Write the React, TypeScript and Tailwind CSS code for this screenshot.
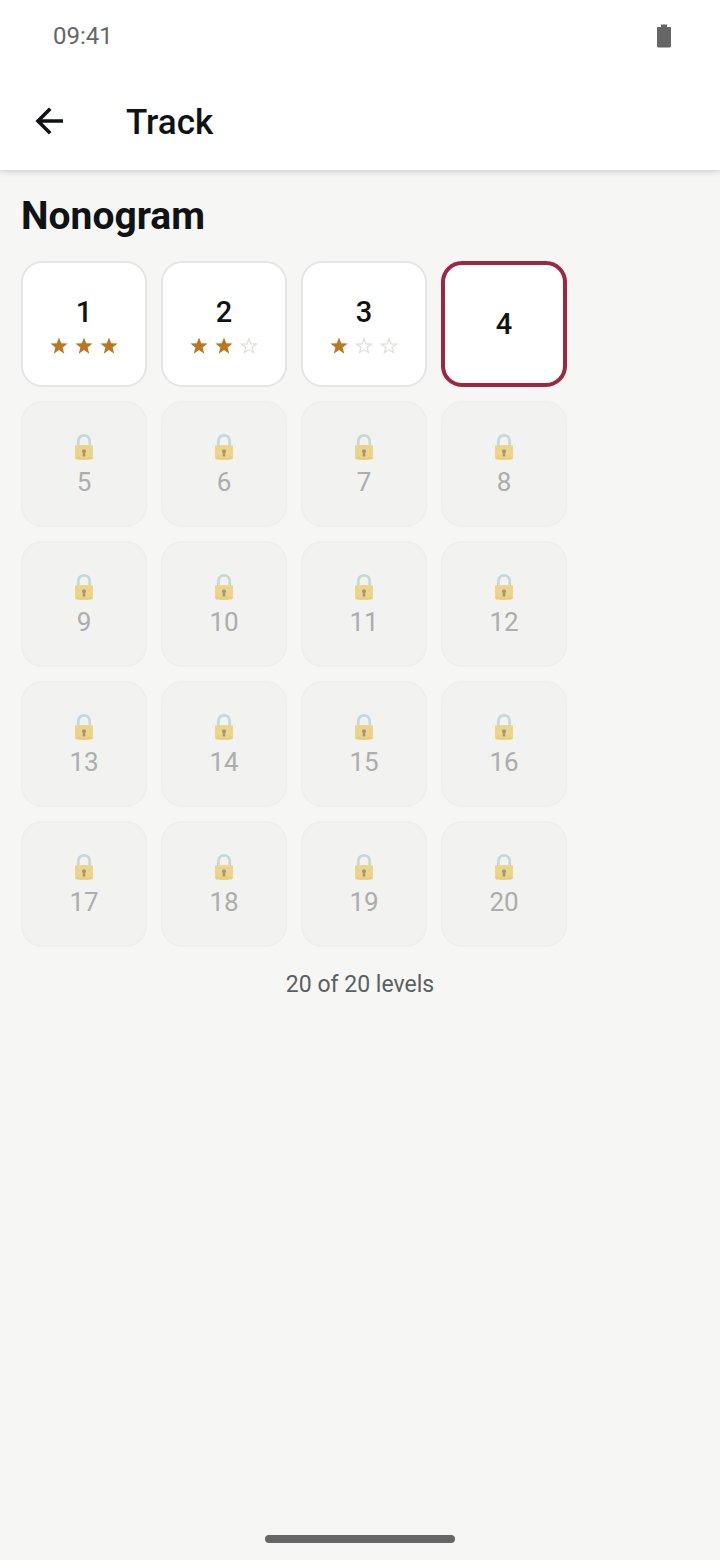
import { useState } from 'react';

type Level = {
  id: number;
  stars: number;
  locked: boolean;
};

const TOTAL_LEVELS = 20;
const STARS_BY_LEVEL = [3, 2, 1, 0];

const levels: Level[] = Array.from({ length: TOTAL_LEVELS }, (_, i) => ({
  id: i + 1,
  stars: STARS_BY_LEVEL[i] ?? 0,
  locked: i >= STARS_BY_LEVEL.length,
}));

const Star = ({ filled }: { filled: boolean }) => (
  <svg viewBox="0 0 18 18" className="w-[18px] h-[18px]" aria-hidden="true">
    {filled ? (
      <path
        d="M9 0.4L11.2 6.3L17.6 6.6L12.6 10.5L14.3 16.7L9 13.1L3.7 16.7L5.4 10.5L0.4 6.6L6.8 6.3Z"
        fill="#b87720"
      />
    ) : (
      <path
        d="M9 1.8L10.9 6.8L16.4 7.1L12.1 10.4L13.6 15.7L9 12.6L4.4 15.7L5.9 10.4L1.6 7.1L7.1 6.8Z"
        fill="none"
        stroke="#dededc"
        strokeWidth="1.2"
      />
    )}
  </svg>
);

const Lock = () => (
  <svg viewBox="0 0 20 28" className="w-5 h-7" aria-hidden="true">
    <path
      d="M4.3 13V8.2C4.3 4.6 6.8 2.4 10 2.4S15.7 4.6 15.7 8.2V13"
      fill="none"
      stroke="#c3d9dd"
      strokeWidth="2.8"
    />
    <path
      d="M1 12.6Q10 11.2 19 12.6V24.4Q19 26.4 17 26.6Q10 27.6 3 26.6Q1 26.4 1 24.4Z"
      fill="#ecd489"
    />
    <path d="M2 24.6Q10 26.4 18 24.6" fill="none" stroke="#e8cb7b" strokeWidth="1.6" />
    <circle cx="10" cy="18.2" r="2" fill="#a39680" />
    <path d="M9 18.5H11L11.4 23.4H8.6Z" fill="#a39680" />
  </svg>
);

const LevelCard = ({
  level,
  selected,
  onSelect,
}: {
  level: Level;
  selected: boolean;
  onSelect: () => void;
}) => {
  if (level.locked) {
    return (
      <button
        disabled
        aria-label={`Level ${level.id}, locked`}
        className="flex flex-col items-center justify-center gap-[5px] pt-[3px] size-[126px] rounded-[21px] border-2 border-[#efefed] bg-[#f2f2f0]"
      >
        <Lock />
        <span className="text-[26px] leading-8 text-[#acadac]">{level.id}</span>
      </button>
    );
  }

  return (
    <button
      onClick={onSelect}
      className={`flex flex-col items-center justify-center size-[126px] rounded-[21px] bg-white ${
        selected ? 'border-4 border-[#9b2743]' : 'border-2 border-[#e5e5e3]'
      }`}
    >
      <span className="text-[29px] leading-9 font-medium">{level.id}</span>
      {level.stars > 0 && (
        <span className="flex gap-[7px] mt-[7px]">
          {[1, 2, 3].map((n) => (
            <Star key={n} filled={n <= level.stars} />
          ))}
        </span>
      )}
    </button>
  );
};

const App = () => {
  const [current, setCurrent] = useState(4);

  return (
    <div className="flex flex-col min-h-screen bg-[#f6f6f4] text-[#101314] font-[Roboto,sans-serif]">
      <header className="bg-white shadow-[0_1px_7px_rgba(0,0,0,0.2)]">
        <div className="flex items-center justify-between h-[72px] pl-[53px] pr-12">
          <span className="text-2xl text-[#666666]">09:41</span>
          <svg viewBox="0 0 16 24" className="w-4 h-6" aria-label="Battery">
            <path
              d="M5 0.5H11V3H14Q15 3 15 4V22Q15 23.5 13.5 23.5H2.5Q1 23.5 1 22V4Q1 3 2 3H5Z"
              fill="#666666"
            />
          </svg>
        </div>
        <div className="flex items-center h-[98px] px-7">
          <button aria-label="Back" className="flex items-center justify-center size-[42px]">
            <svg viewBox="0 0 42 42" className="size-[42px]" fill="none" stroke="currentColor" strokeWidth="3.6">
              <path d="M35 21H10M22.2 8.8L10 21L22.2 33.2" />
            </svg>
          </button>
          <h1 className="ml-14 pt-1 text-[35px] leading-10 font-medium">Track</h1>
        </div>
      </header>

      <main className="px-[21px] pt-[22px]">
        <h2 className="text-[39px] leading-[49px] font-bold">Nonogram</h2>
        <div className="flex flex-wrap gap-[14px] mt-5 max-w-[560px]">
          {levels.map((level) => (
            <LevelCard
              key={level.id}
              level={level}
              selected={level.id === current}
              onSelect={() => setCurrent(level.id)}
            />
          ))}
        </div>
        <p className="mt-[22px] text-center text-[23px] leading-8 text-[#5a5f63]">
          {TOTAL_LEVELS} of {levels.length} levels
        </p>
      </main>

      <div className="mt-auto mb-[17px] mx-auto w-[190px] h-2 rounded-full bg-[#666666]" />
    </div>
  );
};

export default App;
